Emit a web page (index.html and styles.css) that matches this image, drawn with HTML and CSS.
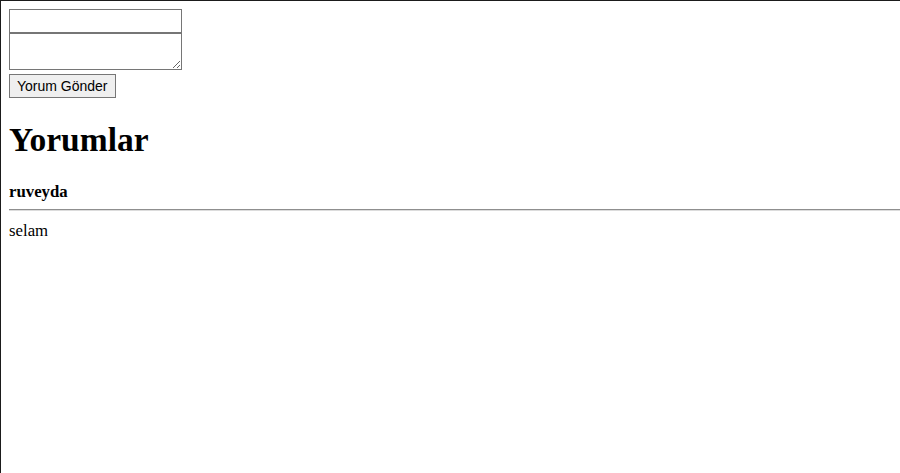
FILE: index.html
```html
<!DOCTYPE html>
<html>
  <head>
    <title>Yorumlar</title>
    <meta charset="UTF-8">
    <link rel="stylesheet" href="styles.css">
  </head>
  <body>
    <form class="comment-form">
      <input type="text" class="name-field"><br>
      <textarea class="comment-field"></textarea><br>
      <button type="submit" class="send-btn">Yorum Gönder</button>
    </form>
    <h1>Yorumlar</h1>
    <div class="comment">
      <h4 class="author">ruveyda</h4>
      <hr class="divider">
      <p class="text">selam</p>
    </div>
  </body>
</html>
```

FILE: styles.css
```css
html {
  border-top: 1px solid #1b1b1b;
  border-left: 1px solid #1b1b1b;
  min-height: 100%;
  box-sizing: border-box;
}
body {
  margin: 8px 0 8px 8px;
  font-family: 'Liberation Serif', serif;
  font-size: 16.8px;
  color: #000;
}
.name-field {
  box-sizing: border-box;
  width: 173px;
  height: 24px;
  margin: 0;
  padding: 1px 2px;
  border: 1px solid #767676;
  font-family: 'Liberation Sans', sans-serif;
  font-size: 13px;
}
.comment-field {
  box-sizing: border-box;
  width: 173px;
  height: 37px;
  margin: 0;
  padding: 2px;
  border: 1px solid #767676;
  font-family: 'Liberation Mono', monospace;
  font-size: 13px;
  vertical-align: bottom;
}
.send-btn {
  box-sizing: border-box;
  height: 24px;
  margin: 4px 0 0;
  padding: 1px 7px;
  border: 1px solid #767676;
  border-radius: 0;
  background: #efefef;
  font-family: 'Liberation Sans', sans-serif;
  font-size: 14px;
  color: #000;
}
h1 {
  font-size: 33.5px;
  margin: 23px 0 23px;
}
.author {
  margin: 0 0 7px;
}
.divider {
  margin: 0;
  border: 0;
  border-top: 1px solid #8f8f8f;
  border-bottom: 1px solid #dcdcdc;
}
.text {
  margin: 10px 0;
}
```
